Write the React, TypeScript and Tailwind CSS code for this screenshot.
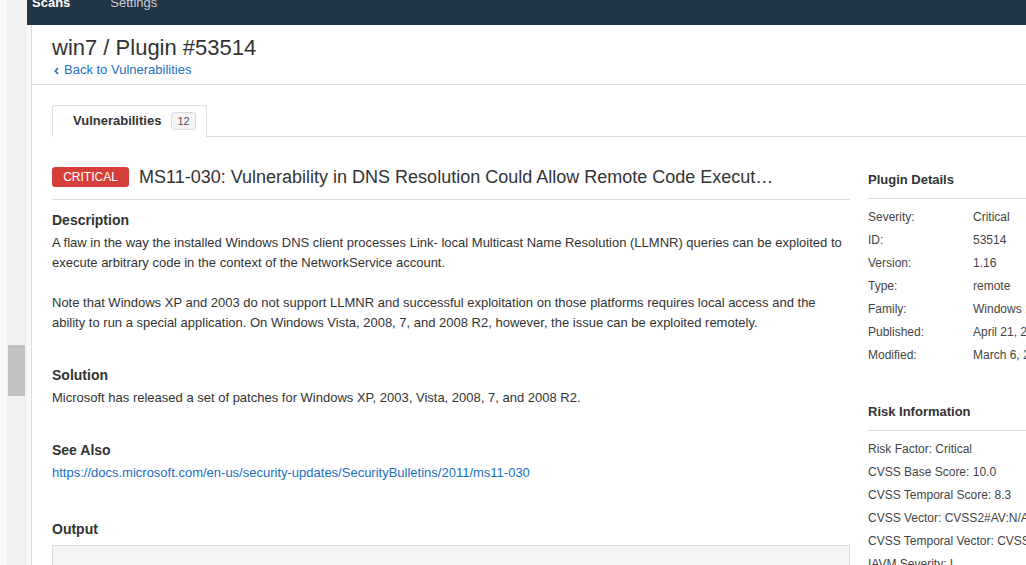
import React from "react";

const pluginDetails = [
  ["Severity:", "Critical"],
  ["ID:", "53514"],
  ["Version:", "1.16"],
  ["Type:", "remote"],
  ["Family:", "Windows : Microsoft Bulletins"],
  ["Published:", "April 21, 2011"],
  ["Modified:", "March 6, 2019"],
];

const riskInfo = [
  "Risk Factor: Critical",
  "CVSS Base Score: 10.0",
  "CVSS Temporal Score: 8.3",
  "CVSS Vector: CVSS2#AV:N/AC:L/Au:N/C:C/I:C/A:C",
  "CVSS Temporal Vector: CVSS2#E:F/RL:OF/RC:C",
  "IAVM Severity: I",
];

function Section({ title, children, className = "" }: { title: string; children: React.ReactNode; className?: string }) {
  return (
    <div className={className}>
      <h3 className="text-[14px] leading-[20px] font-bold text-[#333] mb-[3px]">{title}</h3>
      {children}
    </div>
  );
}

export default function App() {
  return (
    <div className="flex h-[565px] w-[1026px] overflow-hidden bg-white font-['Liberation_Sans',Arial,sans-serif] text-[#333]">
      {/* scrollbar gutter */}
      <div className="flex w-[27px] shrink-0">
        <div className="w-[7px] bg-[#f9f9f9]" />
        <div className="w-[20px] bg-[#f1f1f1] pt-[345px] pl-[1px]">
          <div className="h-[51px] w-[17px] bg-[#c1c1c1]" />
        </div>
      </div>

      <div className="flex min-w-0 flex-1 flex-col">
        <nav className="flex h-[25px] shrink-0 items-start gap-[40px] overflow-hidden bg-[#223544] pl-[5px] text-[13px] leading-[16px]">
          <span className="-mt-[5px] font-bold text-white">Scans</span>
          <span className="-mt-[5px] text-[#c9ced3]">Settings</span>
        </nav>

        <div className="flex flex-1 bg-[#f9f9f9] pl-[4px]">
          <div className="min-w-0 flex-1 overflow-hidden border-l border-[#ddd] bg-white">
            <div className="border-b border-[#ddd] pl-[20px] pt-[10px] pb-[6px]">
              <h1 className="text-[22px] leading-[26px] text-[#333]">win7 / Plugin #53514</h1>
              <a href="#" className="mt-[1px] flex items-center gap-[5px] pl-[2px] text-[13px] leading-[16px] text-[#1a6fc1]">
                <svg width="5" height="8" viewBox="0 0 5 8" className="mt-[2px]">
                  <path d="M4 1 L1.3 4 L4 7" fill="none" stroke="#1a6fc1" strokeWidth="1.6" />
                </svg>
                Back to Vulnerabilities
              </a>
            </div>

            <div className="pl-[20px]">
              <div className="mt-[20px] flex border-b border-[#ddd]">
                <div className="-mb-px flex h-[32px] items-center rounded-t-[3px] border border-[#ddd] border-b-white bg-white pl-[20px] pr-[10px]">
                  <span className="text-[13px] font-bold text-[#333]">Vulnerabilities</span>
                  <span className="ml-[10px] flex h-[18px] items-center rounded-[3px] border border-[#ddd] bg-[#f5f5f5] px-[5px] text-[11px] text-[#555]">
                    12
                  </span>
                </div>
              </div>

              <div className="flex">
                <div className="w-[798px] shrink-0">
                  <div className="mt-[29px] flex items-center border-b border-[#ddd] pb-[11px]">
                    <span className="flex h-[20px] w-[77px] shrink-0 items-center justify-center rounded-[3px] bg-[#d43f3a] text-[12px] text-white">
                      CRITICAL
                    </span>
                    <span className="ml-[10px] w-[637px] truncate text-[18px] leading-[22px] text-[#333]">
                      MS11-030: Vulnerability in DNS Resolution Could Allow Remote Code Execution (2509553) (remote check)
                    </span>
                  </div>

                  <Section title="Description" className="mt-[10px]">
                    <p className="whitespace-nowrap text-[13px] leading-[20px]">
                      A flaw in the way the installed Windows DNS client processes Link- local Multicast Name Resolution (LLMNR) queries can be exploited to
                      <br />
                      execute arbitrary code in the context of the NetworkService account.
                    </p>
                    <p className="mt-[20px] whitespace-nowrap text-[13px] leading-[20px]">
                      Note that Windows XP and 2003 do not support LLMNR and successful exploitation on those platforms requires local access and the
                      <br />
                      ability to run a special application. On Windows Vista, 2008, 7, and 2008 R2, however, the issue can be exploited remotely.
                    </p>
                  </Section>

                  <Section title="Solution" className="mt-[32px]">
                    <p className="text-[13px] leading-[20px]">
                      Microsoft has released a set of patches for Windows XP, 2003, Vista, 2008, 7, and 2008 R2.
                    </p>
                  </Section>

                  <Section title="See Also" className="mt-[32px]">
                    <a href="#" className="block text-[13px] leading-[20px] text-[#1a6fc1]">
                      https://docs.microsoft.com/en-us/security-updates/SecurityBulletins/2011/ms11-030
                    </a>
                  </Section>

                  <div className="mt-[36px]">
                    <h3 className="mb-[6px] text-[14px] leading-[20px] font-bold text-[#333]">Output</h3>
                    <div className="h-[80px] border border-[#ddd] bg-[#f5f5f5]" />
                  </div>
                </div>

                <div className="ml-[18px] w-[300px] shrink-0 pt-[34px] text-[12px] text-[#444]">
                  <h4 className="border-b border-[#ddd] pt-[1px] pb-[10px] text-[13px] leading-[16px] font-bold text-[#333]">Plugin Details</h4>
                  <div className="pt-[6px]">
                    {pluginDetails.map(([label, value]) => (
                      <div key={label} className="flex h-[23px] items-center whitespace-nowrap">
                        <span className="w-[105px] shrink-0">{label}</span>
                        <span>{value}</span>
                      </div>
                    ))}
                  </div>

                  <h4 className="mt-[37px] border-b border-[#ddd] pt-[1px] pb-[10px] text-[13px] leading-[16px] font-bold text-[#333]">Risk Information</h4>
                  <div className="pt-[6px]">
                    {riskInfo.map((item) => (
                      <div key={item} className="flex h-[23px] items-center whitespace-nowrap">
                        {item}
                      </div>
                    ))}
                  </div>
                </div>
              </div>
            </div>
          </div>
        </div>
      </div>
    </div>
  );
}
